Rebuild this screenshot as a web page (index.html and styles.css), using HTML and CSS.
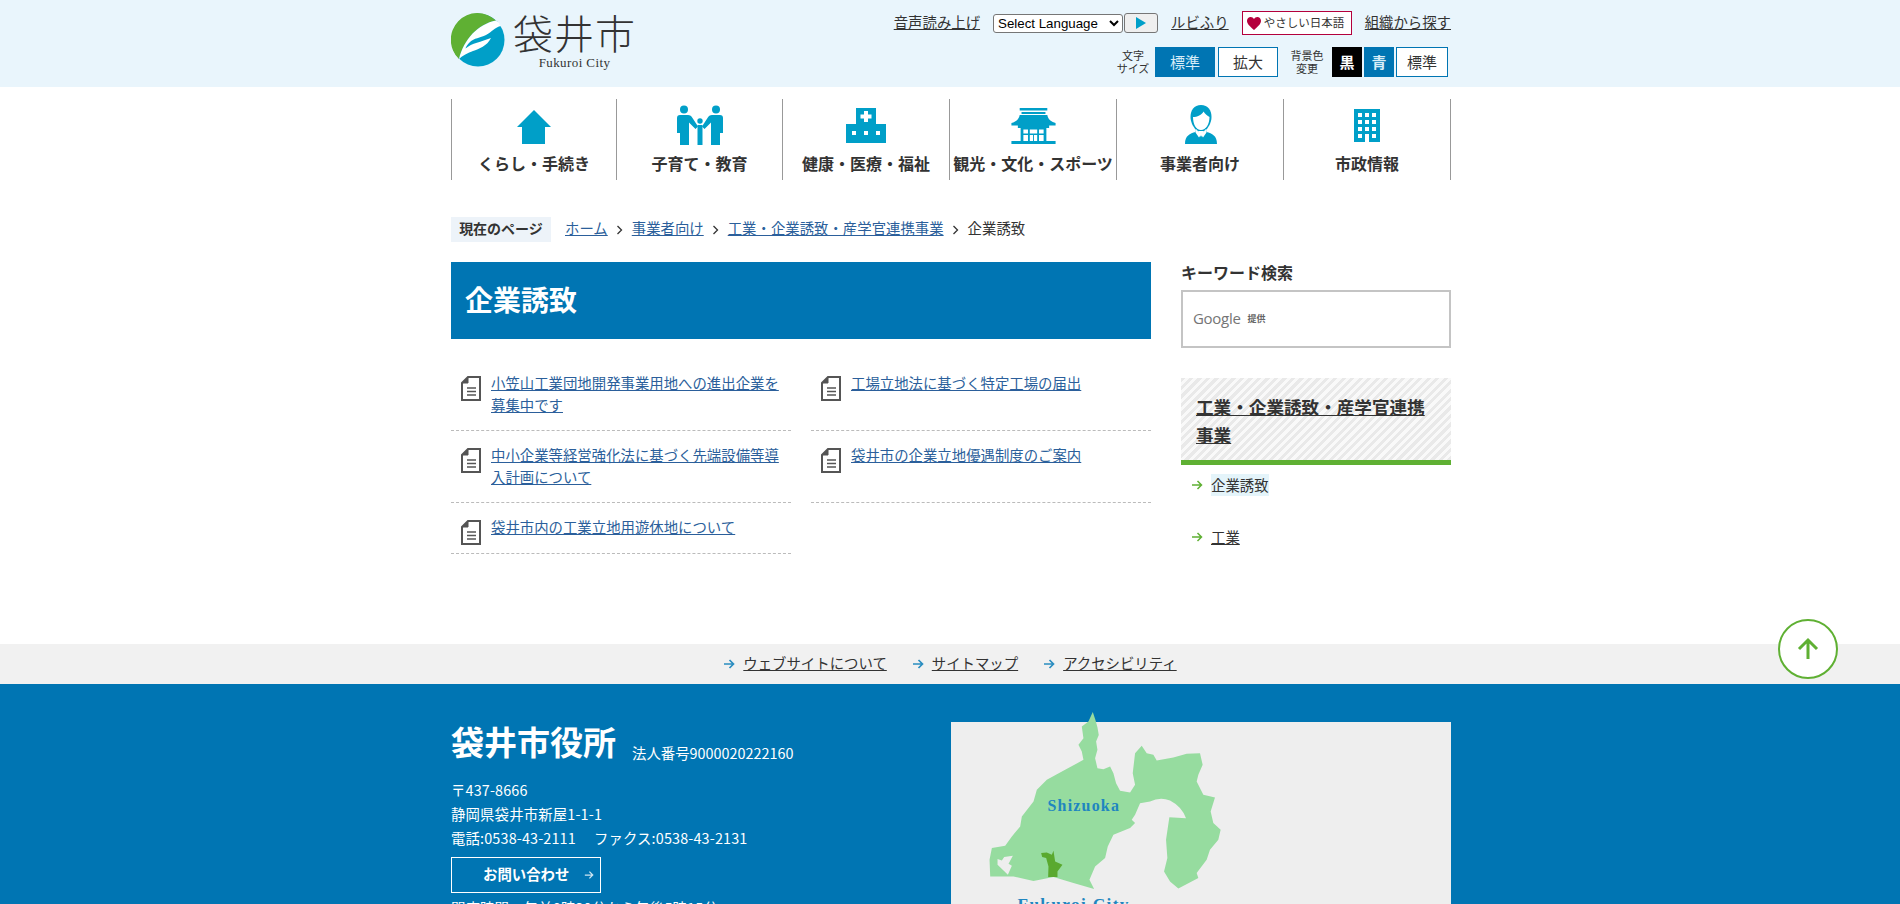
FILE: index.html
```html
<!DOCTYPE html>
<html lang="ja">
<head>
    <meta charset="UTF-8">
    <meta name="viewport" content="width=device-width, initial-scale=1.0">
    <title>企業誘致 | 袋井市</title>
    <link rel="stylesheet" href="styles.css">
</head>
<body>
    <!-- Header -->
    <header class="site-header">
        <div class="wrap header-inner">
            <a class="logo" href="#">
                <svg class="logo-mark" viewBox="0 0 54 54">
                    <circle cx="27" cy="27" r="26.5" fill="#009fc8"/>
                    <path d="M8 46 A26.5 26.5 0 0 1 45 7.5 C27 11 13 26 8 46Z" fill="#5fb033"/>
                    <path d="M8 46 C13 26 27 11 45 7.5 Q48 9.5 50 13 C44 14 41 19 35 22 C29 25 23 25 19 29 C16 32 15 34 14.500 35.500 C21 30 30 29 40 25 C36 33 28 36 22 38 C16 40 11 43 8 46Z" fill="#fff"/>
                </svg>
                <span class="logo-text">
                    <span class="logo-ja">袋井市</span>
                    <span class="logo-en">Fukuroi City</span>
                </span>
            </a>
            <div class="tools">
                <div class="tools-row">
                    <a class="tool-link" href="#">音声読み上げ</a>
                    <span class="translate">
                        <select class="lang-select"><option>Select Language</option></select>
                        <button class="lang-go" type="button" aria-label="go"><svg viewBox="0 0 10 12" width="10" height="12"><path d="M0 0L10 6L0 12Z" fill="#009fc8"/></svg></button>
                    </span>
                    <a class="tool-link" href="#">ルビふり</a>
                    <a class="easy-ja" href="#">
                        <svg viewBox="0 0 14 13" width="14" height="13"><path d="M7 13C3 9.500 0 7 0 3.800C0 1.500 1.800 0 3.700 0C5.100 0 6.300 .8 7 2C7.700 .8 8.900 0 10.300 0C12.200 0 14 1.500 14 3.800C14 7 11 9.500 7 13Z" fill="#b4003c"/></svg>
                        やさしい日本語
                    </a>
                    <a class="tool-link" href="#">組織から探す</a>
                </div>
                <div class="tools-row tools-row-2">
                    <span class="mini-label size-label">文字<br>サイズ</span>
                    <a class="btn btn-std on" href="#">標準</a>
                    <a class="btn btn-big" href="#">拡大</a>
                    <span class="mini-label color-label">背景色<br>変更</span>
                    <a class="btn btn-color black" href="#">黒</a>
                    <a class="btn btn-color blue" href="#">青</a>
                    <a class="btn btn-color plain" href="#">標準</a>
                </div>
            </div>
        </div>
    </header>

    <!-- Global nav -->
    <nav class="wrap gnav">
        <a class="gnav-item" href="#">
            <svg class="gnav-icon" viewBox="0 0 60 52"><path d="M30 10L47 27H41V44H18V27H13Z"/></svg>
            <span>くらし・手続き</span>
        </a>
        <a class="gnav-item" href="#">
            <svg class="gnav-icon" viewBox="0 0 60 52">
                <circle cx="14" cy="9.500" r="4"/><circle cx="46" cy="9.500" r="4"/><circle cx="30" cy="21" r="2.700"/>
                <path d="M10 15H18Q21 15 22.500 18L28 26.500L25.500 29L19 22.500V45H10V33H7V18Q7 15 10 15Z"/>
                <path d="M50 15H42Q39 15 37.500 18L32 26.500L34.500 29L41 22.500V45H50V33H53V18Q53 15 50 15Z"/>
                <path d="M27.500 25H32.500V45H27.500Z"/>
            </svg>
            <span>子育て・教育</span>
        </a>
        <a class="gnav-item" href="#">
            <svg class="gnav-icon" viewBox="0 0 60 52">
                <path d="M20 8H40V24H50V43H10V24H20Z"/>
                <path d="M28 11H32V14.500H35.500V18.500H32V22H28V18.500H24.500V14.500H28Z" fill="#fff"/>
                <path d="M16 31h4v4h-4zM28 31h4v4h-4zM40 31h4v4h-4z" fill="#fff"/>
            </svg>
            <span>健康・医療・福祉</span>
        </a>
        <a class="gnav-item" href="#">
            <svg class="gnav-icon" viewBox="0 0 60 52">
                <g transform="translate(30.500 0) scale(.92 1) translate(-30 0)">
                    <path d="M15 8H45V10.500H15ZM17 12H43V14H17Z"/>
                    <path d="M15 15H45C46 20 50 22 54 23V25.500H47V28H13V25.500H6V23C10 22 14 20 15 15Z"/>
                    <path d="M16 28H44V41H16Z"/>
                    <path d="M19 29.500h5v4h-5zM26 29.500h8v4h-8zM36 29.500h5v4h-5zM19 35h5v6h-5zM26 35h3.500v6H26zM30.500 35H34v6h-3.500zM36 35h5v6h-5z" fill="#fff"/>
                    <path d="M6 41H54V44H6Z"/>
                </g>
            </svg>
            <span>観光・文化・スポーツ</span>
        </a>
        <a class="gnav-item" href="#">
            <svg class="gnav-icon" viewBox="0 0 60 52">
                <path d="M31 5C24 5 20.500 10 20.500 17C20.500 23 24 28 27 31H35C38 28 41.500 23 41.500 17C41.500 10 38 5 31 5Z"/>
                <path d="M23 17C27 17 32 15 33.500 11.500C35 14 37.500 16 39.500 17C39.500 24 36 30 31 30C26 30 23 24 23 17Z" fill="#fff"/>
                <path d="M26.500 28L31 37L35.500 28L36.500 32C42 33.500 47 35.500 47 44H15C15 35.500 20 33.500 25.500 32Z"/>
                <path d="M26.500 29L25.500 32.500L29 37.500L31 34.500L33 37.500L36.500 32.500L35.500 29C34 32 32 33 31 33C30 33 28 32 26.500 29Z" fill="#fff"/>
            </svg>
            <span>事業者向け</span>
        </a>
        <a class="gnav-item" href="#">
            <svg class="gnav-icon" viewBox="0 0 60 52">
                <path d="M17 9H43V42H17Z"/>
                <path d="M21 13h4v4h-4zM28 13h4v4h-4zM35 13h4v4h-4zM21 20h4v4h-4zM28 20h4v4h-4zM35 20h4v4h-4zM21 27h4v4h-4zM28 27h4v4h-4zM35 27h4v4h-4zM21 34h4v4h-4zM35 34h4v4h-4zM28 34h4v8h-4z" fill="#fff"/>
            </svg>
            <span>市政情報</span>
        </a>
    </nav>

    <!-- Breadcrumb -->
    <div class="wrap crumbs">
        <span class="crumbs-label">現在のページ</span>
        <a href="#">ホーム</a>
        <svg class="crumb-sep" viewBox="0 0 6 10"><path d="M1 1L5 5L1 9" fill="none" stroke="#333" stroke-width="1.300"/></svg>
        <a href="#">事業者向け</a>
        <svg class="crumb-sep" viewBox="0 0 6 10"><path d="M1 1L5 5L1 9" fill="none" stroke="#333" stroke-width="1.300"/></svg>
        <a href="#">工業・企業誘致・産学官連携事業</a>
        <svg class="crumb-sep" viewBox="0 0 6 10"><path d="M1 1L5 5L1 9" fill="none" stroke="#333" stroke-width="1.300"/></svg>
        <span class="crumb-here">企業誘致</span>
    </div>

    <!-- Main -->
    <div class="wrap content">
        <main class="main-col">
            <h1 class="page-title">企業誘致</h1>
            <ul class="page-list">
                <li><svg class="doc-icon" viewBox="0 0 20 25"><use href="#doc"/></svg><a href="#">小笠山工業団地開発事業用地への進出企業を募集中です</a></li>
                <li><svg class="doc-icon" viewBox="0 0 20 25"><use href="#doc"/></svg><a href="#">工場立地法に基づく特定工場の届出</a></li>
                <li><svg class="doc-icon" viewBox="0 0 20 25"><use href="#doc"/></svg><a href="#">中小企業等経営強化法に基づく先端設備等導入計画について</a></li>
                <li><svg class="doc-icon" viewBox="0 0 20 25"><use href="#doc"/></svg><a href="#">袋井市の企業立地優遇制度のご案内</a></li>
                <li><svg class="doc-icon" viewBox="0 0 20 25"><use href="#doc"/></svg><a href="#">袋井市内の工業立地用遊休地について</a></li>
            </ul>
        </main>
        <aside class="side-col">
            <div class="search-title">キーワード検索</div>
            <div class="search-box"><span class="google">Google</span><span class="google-by">提供</span></div>
            <div class="side-head"><a href="#">工業・企業誘致・産学官連携事業</a></div>
            <ul class="side-list">
                <li><svg class="arrow" viewBox="0 0 12 12"><path d="M1 6H10M6.500 2L10.500 6L6.500 10" fill="none" stroke="#5fb033" stroke-width="1.500"/></svg><span class="current">企業誘致</span></li>
                <li><svg class="arrow" viewBox="0 0 12 12"><path d="M1 6H10M6.500 2L10.500 6L6.500 10" fill="none" stroke="#5fb033" stroke-width="1.500"/></svg><a href="#">工業</a></li>
            </ul>
        </aside>
    </div>

    <!-- Footer links -->
    <div class="foot-links">
        <a href="#"><svg class="arrow" viewBox="0 0 12 12"><path d="M1 6H10M6.500 2L10.500 6L6.500 10" fill="none" stroke="#2a8dc0" stroke-width="1.700"/></svg><span>ウェブサイトについて</span></a>
        <a href="#"><svg class="arrow" viewBox="0 0 12 12"><path d="M1 6H10M6.500 2L10.500 6L6.500 10" fill="none" stroke="#2a8dc0" stroke-width="1.700"/></svg><span>サイトマップ</span></a>
        <a href="#"><svg class="arrow" viewBox="0 0 12 12"><path d="M1 6H10M6.500 2L10.500 6L6.500 10" fill="none" stroke="#2a8dc0" stroke-width="1.700"/></svg><span>アクセシビリティ</span></a>
    </div>

    <!-- Footer -->
    <footer class="site-footer">
        <div class="wrap footer-inner">
            <div class="office">
                <div class="office-name"><strong>袋井市役所</strong><span>法人番号9000020222160</span></div>
                <p>〒437-8666</p>
                <p>静岡県袋井市新屋1-1-1</p>
                <p>電話:0538-43-2111<span class="fax">ファクス:0538-43-2131</span></p>
                <a class="contact-btn" href="#"><span>お問い合わせ</span><svg class="arrow" viewBox="0 0 12 12"><path d="M1 6H10M6.500 2L10.500 6L6.500 10" fill="none" stroke="#cfe6f2" stroke-width="1.500"/></svg></a>
                <p class="hours">開庁時間　午前8時30分から午後5時15分</p>
            </div>
            <div class="map-box">
                <svg class="map" viewBox="0 0 1560 1000">
                    <path fill="#96dc9f" d="M458 306L466 330L472 352L476 375L468 395L472 420L465 445L472 475L490 478L510 470L520 490L528 520L540 543L570 548L585 525L578 490L585 430L605 408L620 430L640 435L650 452L700 443L740 432L780 430L788 465L775 495L770 515L790 555L825 563L812 605L820 640L842 660L835 690L810 720L800 750L770 790L775 805L715 836L690 815L672 785L682 745L678 690L688 622L738 625Q725 590 690 572Q660 560 630 575L600 580L585 615L575 630L585 640L570 655L520 675L503 710L495 745L465 770L448 810L462 838L400 820L340 802L280 814L220 800L150 800L148 750L155 715L195 708L215 680L240 650L245 620L280 575L290 540L320 510L375 480L430 450L425 425L415 405L430 385L425 350L445 335Z"/>
                    <path fill="#eee" d="M172 748L185 752L192 742L218 738L205 762L215 768L203 795L190 782L172 765Z"/>
                    <path fill="#5aa92f" d="M303 730L320 728L335 735L340 723L345 755L367 765L352 785L352 802L324 802L325 770L318 745L306 742Z"/>
                    <text class="map-label" x="322" y="605">Shizuoka</text>
                    <text class="map-label map-label-city" x="232" y="900">Fukuroi City</text>
                </svg>
            </div>
        </div>
    </footer>

    <a class="to-top" href="#" aria-label="top"><svg viewBox="0 0 24 24" width="24" height="24"><path d="M12 22V4M3 12L12 3L21 12" fill="none" stroke="#5fb033" stroke-width="3"/></svg></a>

    <svg class="defs" width="0" height="0">
        <symbol id="doc" viewBox="0 0 20 25">
            <path d="M7 1H19V24H1V7Z" fill="#fff" stroke="#555" stroke-width="2"/>
            <path d="M7 1V7H1Z" fill="#555" stroke="#555" stroke-width="1"/>
            <path d="M6 12H15M6 15.500H15M6 19H15" stroke="#555" stroke-width="1.300"/>
        </symbol>
    </svg>
</body>
</html>
```

FILE: styles.css
```css
html, body {
    margin: 0;
    padding: 0;
}

body {
    height: 100vh;
    overflow: hidden;
    font-family: "Noto Sans CJK JP", "Noto Sans", sans-serif;
    font-size: 14.4px;
    line-height: 21.6px;
    color: #333;
    background-color: white;
}

a {
    color: #333;
}

ul {
    list-style: none;
    margin: 0;
    padding: 0;
}

p {
    margin: 0;
}

.wrap {
    width: 1000px;
    margin: 0 449px 0 451px;
}

.defs {
    position: absolute;
}

/* header */
.site-header {
    height: 87px;
    background-color: #e9f5fc;
}

.header-inner {
    display: flex;
    justify-content: space-between;
}

.logo {
    display: flex;
    text-decoration: none;
    padding-top: 13px;
}

.logo-mark {
    width: 54px;
    height: 54px;
}

.logo-text {
    display: flex;
    flex-direction: column;
    align-items: center;
    margin-left: 8px;
    color: #333;
}

.logo-ja {
    font-size: 40px;
    line-height: 40px;
    font-weight: 300;
    letter-spacing: 1px;
    margin-top: -1px;
}

.logo-en {
    font-family: "Liberation Serif", serif;
    font-size: 13px;
    line-height: 16px;
    letter-spacing: .4px;
    margin-top: 3px;
}

.tools {
    display: flex;
    flex-direction: column;
    align-items: flex-end;
}

.tools-row {
    display: flex;
    align-items: center;
    height: 24px;
    margin-top: 11px;
}

.tools-row-2 {
    height: 30px;
    margin-top: 12px;
    margin-right: 3px;
    font-size: 13px;
}

.tool-link {
    line-height: 18px;
    margin-bottom: 3px;
}

.translate {
    display: flex;
    align-items: center;
    margin: 0 13px 0 13px;
}

.lang-select {
    width: 130px;
    height: 19px;
    padding: 0;
    font-family: "Liberation Sans", sans-serif;
    font-size: 13.3px;
    background-color: white;
    border: 1px solid #767676;
    border-radius: 3px;
}

.lang-go {
    display: flex;
    align-items: center;
    justify-content: center;
    width: 34px;
    height: 20px;
    padding: 0;
    margin-left: 1px;
    background-color: #efefef;
    border: 1px solid #767676;
    border-radius: 3px;
}

.easy-ja {
    box-sizing: border-box;
    display: flex;
    align-items: center;
    gap: 3px;
    width: 110px;
    height: 24px;
    padding: 0 4px;
    margin: 0 13px;
    font-size: 11.5px;
    text-decoration: none;
    white-space: nowrap;
    background-color: white;
    border: 1px solid #b4003c;
}

.mini-label {
    font-size: 11px;
    line-height: 13px;
    text-align: center;
}

.size-label {
    width: 34px;
}

.color-label {
    width: 36px;
    margin: 0 7px 0 11px;
}

.btn {
    display: flex;
    align-items: center;
    justify-content: center;
    box-sizing: border-box;
    height: 30px;
    font-size: 15px;
    text-decoration: none;
    background-color: white;
    border: 1px solid #0075b3;
}

.btn-std {
    width: 60px;
    margin-left: 5px;
}

.btn-big {
    width: 60px;
    margin-left: 3px;
}

.btn.on, .btn.blue {
    color: #d7edf8;
    background-color: #0075b3;
}

.btn-color {
    width: 30px;
    margin-right: 2px;
    font-weight: 700;
}

.btn.black {
    color: white;
    background-color: black;
    border-color: black;
}

.btn.plain {
    width: 52px;
    margin-right: 0;
    font-weight: 400;
}

/* global nav */
.gnav {
    display: grid;
    grid-template-columns: 165px 166px 167px 167px 167px 167px;
    height: 81px;
    margin-top: 12px;
    margin-bottom: 0;
    border-right: 1px solid #999;
    box-sizing: border-box;
}

.gnav-item {
    display: flex;
    flex-direction: column;
    align-items: center;
    border-left: 1px solid #999;
    font-size: 16px;
    line-height: 24px;
    font-weight: 700;
    color: #333;
    text-decoration: none;
    white-space: nowrap;
}

.gnav-icon {
    width: 60px;
    height: 52px;
    fill: #009fc8;
    margin: 1px 0 -1px 0;
}

/* breadcrumb */
.crumbs {
    display: flex;
    align-items: center;
    height: 25px;
    margin-top: 37px;
    margin-bottom: 20px;
}

.crumbs-label {
    box-sizing: border-box;
    width: 100px;
    height: 25px;
    margin-right: 14px;
    text-align: center;
    font-size: 14px;
    line-height: 23px;
    font-weight: 700;
    background-color: #edf3f9;
}

.crumbs a, .crumb-here {
    margin-bottom: 3px;
}

.crumbs a, .page-list a {
    color: #2b5f9b;
}

.crumb-sep {
    width: 7px;
    height: 10px;
    margin: 0 9px 0 8px;
}

/* main */
.content {
    display: flex;
    justify-content: space-between;
    height: 382px;
}

.main-col {
    width: 700px;
}

.page-title {
    margin: 0;
    height: 77px;
    padding-left: 14px;
    font-size: 28px;
    line-height: 75px;
    font-weight: 700;
    color: white;
    background-color: #0075b3;
}

.page-list {
    display: grid;
    grid-template-columns: 340px 340px;
    column-gap: 20px;
    margin-top: 20px;
}

.page-list li {
    display: flex;
    align-items: flex-start;
    padding: 13px 0 15px 0;
    border-bottom: 1px dashed #bbb;
}

.doc-icon {
    flex: none;
    width: 20px;
    height: 25px;
    margin: 4px 10px -8px 10px;
}

.side-col {
    width: 270px;
}

.search-title {
    font-size: 16px;
    line-height: 20px;
    font-weight: 700;
}

.search-box {
    box-sizing: border-box;
    display: flex;
    align-items: center;
    height: 58px;
    margin-top: 8px;
    padding-left: 10px;
    border: 2px solid #c4c4c4;
}

.google {
    font-family: "Open Sans", sans-serif;
    font-size: 15px;
    color: #757575;
    letter-spacing: -.3px;
}

.google-by {
    margin-left: 7px;
    font-size: 9px;
    font-weight: 700;
    color: #666;
}

.side-head {
    margin-top: 30px;
    padding: 15px 15px 11px 15px;
    font-size: 17.6px;
    line-height: 28px;
    font-weight: 700;
    border-bottom: 5px solid #5fb033;
    background: repeating-linear-gradient(135deg, #e9e9e9 0, #e9e9e9 3px, #f9f9f9 3px, #f9f9f9 6px);
}

.side-list li {
    display: flex;
    align-items: center;
    height: 22px;
    margin-top: 30px;
    padding-left: 10px;
}

.side-list li:first-child {
    margin-top: 9px;
}

.arrow {
    flex: none;
    width: 12px;
    height: 12px;
}

.side-list .arrow {
    margin-right: 8px;
}

.current {
    background-color: #e4f4fa;
}

/* footer */
.foot-links {
    display: flex;
    justify-content: center;
    align-items: center;
    gap: 25px;
    height: 40px;
    background-color: #f1f1f1;
}

.foot-links a {
    display: flex;
    align-items: center;
    text-decoration: none;
}

.foot-links span {
    margin: 0 0 2px 8px;
    text-decoration: underline;
}

.site-footer {
    height: 400px;
    background-color: #0075b3;
    color: white;
}

.footer-inner {
    display: flex;
}

.office {
    width: 500px;
    padding-top: 33px;
}

.office-name {
    display: flex;
    align-items: flex-end;
    margin-bottom: 13px;
}

.office-name strong {
    font-size: 33px;
    line-height: 48px;
    font-weight: 700;
}

.office-name span {
    margin: 0 0 1px 16px;
}

.office p {
    line-height: 24px;
    letter-spacing: .15px;
}

.fax {
    margin-left: 18px;
}

.contact-btn {
    box-sizing: border-box;
    display: flex;
    align-items: center;
    width: 150px;
    height: 36px;
    margin-top: 7px;
    padding-left: 31px;
    color: white;
    font-weight: 700;
    text-decoration: none;
    border: 1px solid white;
}

.contact-btn span {
    margin-bottom: 3px;
}

.contact-btn .arrow {
    width: 10px;
    height: 10px;
    margin-left: 15px;
}

.office .hours {
    margin-top: 3px;
}

.map-box {
    position: relative;
    width: 500px;
    height: 360px;
    margin-top: 38px;
    background-color: #eee;
}

/* the map image runs a little above its panel */
.map {
    position: absolute;
    left: -11px;
    top: -112px;
    width: 520px;
    height: 333px;
    overflow: visible;
}

.map-label {
    font-family: "Liberation Serif", serif;
    font-size: 48px;
    font-weight: 700;
    letter-spacing: 3.6px;
    fill: #1f86c0;
}

.map-label-city {
    font-size: 52px;
    letter-spacing: 4px;
}

.to-top {
    position: fixed;
    right: 62px;
    bottom: 225px;
    box-sizing: border-box;
    display: flex;
    align-items: center;
    justify-content: center;
    width: 60px;
    height: 60px;
    background-color: white;
    border: 2px solid #5fb033;
    border-radius: 50%;
}
```
